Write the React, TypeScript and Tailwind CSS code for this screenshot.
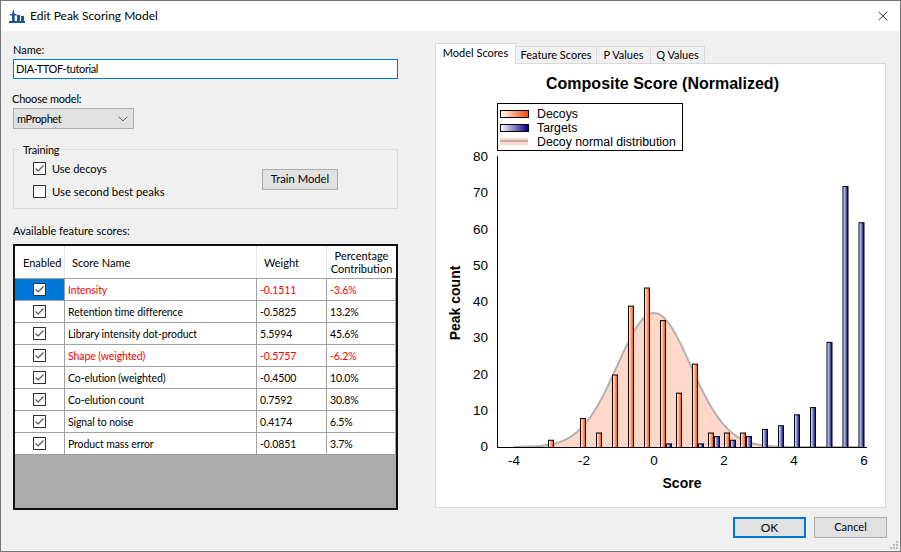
import { ChevronDown, X } from "lucide-react"

const scores = [
  { name: "Intensity", weight: "-0.1511", pct: "-3.6%", bad: true },
  { name: "Retention time difference", weight: "-0.5825", pct: "13.2%" },
  { name: "Library intensity dot-product", weight: "5.5994", pct: "45.6%" },
  { name: "Shape (weighted)", weight: "-0.5757", pct: "-6.2%", bad: true },
  { name: "Co-elution (weighted)", weight: "-0.4500", pct: "10.0%" },
  { name: "Co-elution count", weight: "0.7592", pct: "30.8%" },
  { name: "Signal to noise", weight: "0.4174", pct: "6.5%" },
  { name: "Product mass error", weight: "-0.0851", pct: "3.7%" },
]

// bar centre in page px, count
const decoys = [
  [551, 2], [583, 8], [599, 4], [615, 20], [631, 39], [647, 44], [663, 35],
  [679, 15], [695, 23], [711, 4], [727, 4], [743, 4],
]
const targets = [
  [669, 1], [701, 1], [717, 3], [733, 2], [749, 3], [765, 5], [781, 6],
  [797, 9], [813, 11], [829.5, 29], [845.5, 72], [861.5, 62],
]

const toX = (score: number) => 654 + score * 35
const toY = (count: number) => 447 - count * 3.625

const curvePoints: string[] = []
for (let s = -4; s <= 6; s += 0.1) {
  const count = 37 * Math.exp(-(s * s) / (2 * 1.05 * 1.05))
  curvePoints.push(`${toX(s).toFixed(1)},${toY(count).toFixed(1)}`)
}
const curve = curvePoints.join(" ")

function CheckBox({ checked = true }: { checked?: boolean }) {
  return (
    <span className="w-[13px] h-[13px] border border-[#333333] bg-white flex items-center justify-center shrink-0">
      {checked && (
        <svg width="11" height="11" viewBox="0 0 11 11" fill="none">
          <path d="M1.5 5.5 L4.2 8 L9.5 2.5" stroke="#555555" strokeWidth="1.2" />
        </svg>
      )}
    </span>
  )
}

function Chart() {
  const yTicks = [0, 10, 20, 30, 40, 50, 60, 70, 80]
  const xTicks = [-4, -2, 0, 2, 4, 6]
  return (
    <svg width="449" height="443" viewBox="436 64 449 443" fontFamily="'Liberation Sans', Arial, sans-serif" className="block">
      <defs>
        <linearGradient id="decoy">
          <stop offset="0" stopColor="#ffffff" />
          <stop offset="1" stopColor="#ff4500" />
        </linearGradient>
        <linearGradient id="target">
          <stop offset="0" stopColor="#ffffff" />
          <stop offset="1" stopColor="#000080" />
        </linearGradient>
      </defs>

      <text x="662.5" y="89" textAnchor="middle" fontSize="16" fontWeight="bold">Composite Score (Normalized)</text>

      <polygon points={`514,447 ${curve} 864,447`} fill="#fdd8cb" />
      <polyline points={curve} fill="none" stroke="#b5b0ae" strokeWidth="2" />

      {decoys.map(([x, n]) => (
        <rect key={x} x={x - 2.5} y={toY(n) + 0.5} width="5" height={n * 3.625} fill="url(#decoy)" stroke="#000" />
      ))}
      {targets.map(([x, n]) => (
        <rect key={x} x={x - 2.5} y={toY(n) + 0.5} width="5" height={n * 3.625} fill="url(#target)" stroke="#000" />
      ))}

      <line x1="497.5" y1="156" x2="497.5" y2="447" stroke="#000" />
      <line x1="497" y1="447.5" x2="867" y2="447.5" stroke="#000" />

      {yTicks.map((t) => (
        <text key={t} x="488" y={toY(t) + 4} textAnchor="end" fontSize="13.5">{t}</text>
      ))}
      {xTicks.map((t) => (
        <text key={t} x={toX(t)} y="465" textAnchor="middle" fontSize="13.5">{t}</text>
      ))}

      <text x="682" y="488" textAnchor="middle" fontSize="14" fontWeight="bold">Score</text>
      <text transform="translate(460 303) rotate(-90)" textAnchor="middle" fontSize="14" fontWeight="bold">Peak count</text>

      <rect x="497.5" y="103.5" width="185" height="47" fill="#fff" stroke="#000" />
      <rect x="500.5" y="110.5" width="28" height="7" fill="url(#decoy)" stroke="#000" />
      <rect x="500.5" y="124.5" width="28" height="7" fill="url(#target)" stroke="#000" />
      <rect x="500" y="138" width="28" height="7" fill="#fdd8cb" />
      <line x1="500" y1="141" x2="528" y2="141" stroke="#b5b0ae" strokeWidth="2" />
      <text x="537" y="118" fontSize="12.3">Decoys</text>
      <text x="537" y="132" fontSize="12.3">Targets</text>
      <text x="537" y="146" fontSize="12.3">Decoy normal distribution</text>
    </svg>
  )
}

export default function App() {
  return (
    <div className="relative w-[901px] h-[552px] border border-[#767676] bg-[#f0f0f0] text-[11px] text-black font-['Lato',sans-serif] overflow-hidden">
      <div className="h-[30px] bg-white flex items-center justify-between pl-[8px] pr-[9px]">
        <div className="flex items-center gap-[1px]">
          <svg width="20" height="14" viewBox="0 0 20 14" fill="#1f5299">
            <path d="M0 12h16v2H0z" />
            <path d="M4.3 0 L5.7 5 V12 H3 V5z" />
            <path d="M1 5h6.6v1.5H1z" />
            <path d="M8 6h3v6H8z M12 7h3v5h-3z" />
          </svg>
          <span className="text-[12px]">Edit Peak Scoring Model</span>
        </div>
        <X className="w-[16px] h-[16px] text-[#111111]" strokeWidth={1.2} />
      </div>

      <div className="flex">
        <div className="ml-[12px] w-[385px] flex flex-col">
          <label className="mt-[12px] h-[14px] leading-[14px]">Name:</label>
          <div className="mt-[2px] h-[20px] border border-[#0078d7] bg-white pl-[2px] leading-[18px] flex items-center tracking-[-0.4px]">DIA-TTOF-tutorial</div>

          <label className="mt-[13px] h-[14px] leading-[14px] -ml-px tracking-[-0.2px]">Choose model:</label>
          <div className="mt-[2px] w-[121px] h-[21px] border border-[#adadad] bg-[#e1e1e1] flex items-center justify-between pl-[3px] pr-[2px]">
            <span className="tracking-[-0.4px] pt-px">mProphet</span>
            <ChevronDown className="w-[16px] h-[16px] text-[#444444]" strokeWidth={1.2} />
          </div>

          <div className="relative mt-[20px] h-[60px] border border-[#dcdcdc] flex items-center pl-[19px]">
            <span className="absolute left-[6px] -top-[7px] px-[3px] bg-[#f0f0f0] leading-[14px] tracking-[-0.2px]">Training</span>
            <div className="w-[229px] flex flex-col gap-[10px] pt-[1px]">
              <div className="flex items-center gap-[6px] h-[13px]">
                <CheckBox />
                <span className="pt-[2px]">Use decoys</span>
              </div>
              <div className="flex items-center gap-[6px] h-[13px]">
                <CheckBox checked={false} />
                <span className="text-[11.3px] pt-[2px]">Use second best peaks</span>
              </div>
            </div>
            <button className="w-[76px] h-[21px] border border-[#adadad] bg-[#e1e1e1] flex items-center justify-center text-[11.25px] pt-px">Train Model</button>
          </div>

          <label className="mt-[15px] h-[14px] leading-[14px]">Available feature scores:</label>
          <div className="mt-[6px] h-[266px] border-2 border-[#111111] bg-[#ababab] flex flex-col">
            <div className="h-[33px] bg-white border-b border-[#a0a0a0] grid grid-cols-[50px_192px_70px_69px] items-stretch">
              <div className="flex items-center pl-[8px] pt-[2px] border-r border-[#e6e6e6]">Enabled</div>
              <div className="flex items-center pl-[7px] pt-[2px] border-r border-[#e6e6e6]">Score Name</div>
              <div className="flex items-center pl-[7px] pt-[2px] border-r border-[#e6e6e6]">Weight</div>
              <div className="flex items-center justify-center text-center leading-[13px]">Percentage Contribution</div>
            </div>
            {scores.map((s, i) => (
              <div
                key={s.name}
                className={`h-[22px] bg-white border-b border-[#a0a0a0] grid grid-cols-[50px_192px_70px_69px] items-stretch text-[10.5px] tracking-[-0.1px] ${s.bad ? "text-[#ff0000]" : "text-black"}`}
              >
                <div className={`flex items-center justify-center border-r border-[#a0a0a0] ${i === 0 ? "bg-[#0078d7]" : ""}`}>
                  <CheckBox />
                </div>
                <div className="flex items-center pl-[3px] pt-[2px] border-r border-[#a0a0a0]">{s.name}</div>
                <div className="flex items-center pl-[3px] pt-[2px] border-r border-[#a0a0a0]">{s.weight}</div>
                <div className="flex items-center pl-[3px] pt-[2px] border-r border-[#a0a0a0]">{s.pct}</div>
              </div>
            ))}
          </div>
        </div>

        <div className="ml-[37px] w-[451px] pt-[12px] flex flex-col">
          <div className="flex items-end h-[21px]">
            <div className="relative z-10 w-[81px] h-[21px] bg-white border border-b-0 border-[#d9d9d9] flex items-center justify-center pb-[2px]">Model Scores</div>
            <div className="w-[81px] h-[18px] bg-[#f0f0f0] border border-l-0 border-[#d9d9d9] flex items-center justify-center">Feature Scores</div>
            <div className="w-[54px] h-[18px] bg-[#f0f0f0] border border-l-0 border-[#d9d9d9] flex items-center justify-center">P Values</div>
            <div className="w-[54px] h-[18px] bg-[#f0f0f0] border border-l-0 border-[#d9d9d9] flex items-center justify-center">Q Values</div>
          </div>
          <div className="-mt-px h-[445px] bg-white border border-[#d9d9d9]">
            <Chart />
          </div>
          <div className="mt-[9px] -mr-px flex justify-end gap-[8px]">
            <button className="w-[73px] h-[21px] border-2 border-[#0078d7] bg-[#e1e1e1] flex items-center justify-center text-[12px]">OK</button>
            <button className="w-[73px] h-[21px] border border-[#adadad] bg-[#e1e1e1] flex items-center justify-center">Cancel</button>
          </div>
        </div>
      </div>

      <svg className="absolute right-[2px] bottom-[2px]" width="8" height="8" viewBox="0 0 8 8" fill="#b8b8b8">
        <path d="M6 0h2v2H6z M3 3h2v2H3z M6 3h2v2H6z M0 6h2v2H0z M3 6h2v2H3z M6 6h2v2H6z" />
      </svg>
    </div>
  )
}
